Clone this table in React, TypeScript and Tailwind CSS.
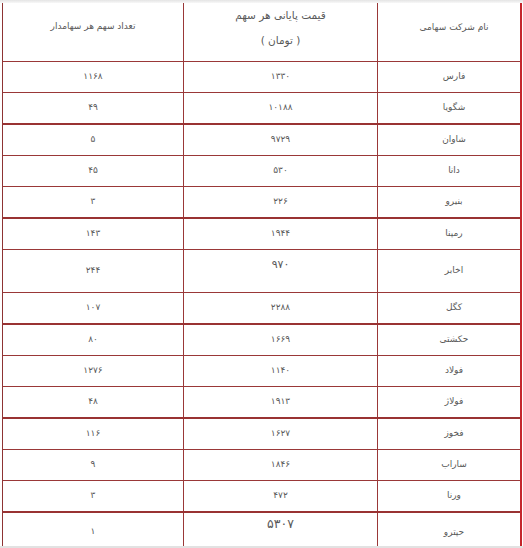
import React from "react";

interface Row {
  name: string;
  price: string;
  count: string;
  h: string;
  thick?: boolean;
}

const rows: Row[] = [
  { name: "فارس", price: "۱۳۳۰", count: "۱۱۶۸", h: "h-[31px]" },
  { name: "شگویا", price: "۱۰۱۸۸", count: "۴۹", h: "h-[32px]", thick: true },
  { name: "شاوان", price: "۹۷۲۹", count: "۵", h: "h-[31px]" },
  { name: "دانا", price: "۵۳۰", count: "۴۵", h: "h-[31px]" },
  { name: "بنیرو", price: "۲۲۶", count: "۳", h: "h-[32px]", thick: true },
  { name: "رمپنا", price: "۱۹۴۴", count: "۱۴۳", h: "h-[31px]" },
  { name: "اخابر", price: "۹۷۰", count: "۲۴۴", h: "h-[43px]" },
  { name: "کگل", price: "۲۲۸۸", count: "۱۰۷", h: "h-[32px]", thick: true },
  { name: "حکشتی", price: "۱۶۶۹", count: "۸۰", h: "h-[31px]" },
  { name: "فولاد", price: "۱۱۴۰", count: "۱۲۷۶", h: "h-[31px]" },
  { name: "فولاژ", price: "۱۹۱۳", count: "۴۸", h: "h-[32px]", thick: true },
  { name: "فخوز", price: "۱۶۲۷", count: "۱۱۶", h: "h-[31px]" },
  { name: "ساراب", price: "۱۸۴۶", count: "۹", h: "h-[31px]" },
  { name: "ورنا", price: "۴۷۲", count: "۳", h: "h-[32px]", thick: true },
];

const App = () => {
  return (
    <div
      className="w-[523px] h-[548px] bg-white overflow-hidden text-[9px] text-[#595959]"
      style={{ fontFamily: '"DejaVu Sans", Tahoma, sans-serif' }}
    >
      <div className="h-[3px] bg-gradient-to-b from-[#e4e4e4] to-[#f8f8f8]" />
      <div
        dir="rtl"
        className="ml-[2px] w-[520px] border-l border-r-2 border-l-[#8e3434] border-r-[#c4262c]"
      >
        {/* header */}
        <div className="flex h-[59px] border-b border-[#9a3838]">
          <div className="w-[142px] pl-[10px] flex items-center justify-center pb-[8px]">
            نام شرکت سهامی
          </div>
          <div className="w-[194px] border-r border-[#9a3838] flex flex-col items-center justify-center text-[10.5px] leading-[25px] pb-[8px]">
            <span>قیمت پایانی هر سهم</span>
            <span>( تومان )</span>
          </div>
          <div className="w-[181px] border-r border-[#9a3838] flex items-center justify-center pb-[10px]">
            تعداد سهم هر سهامدار
          </div>
        </div>

        {rows.map((row) => (
          <div
            key={row.name}
            className={`flex ${row.h} ${row.thick ? "border-b-2 border-[#993232]" : "border-b border-[#9a3838]"}`}
          >
            <div className="w-[142px] pl-[10px] flex items-center justify-center">
              {row.name}
            </div>
            <div className="w-[194px] border-r border-[#9a3838] flex items-center justify-center">
              {row.name === "اخابر" ? (
                <span className="text-[11px] mb-[12px]">{row.price}</span>
              ) : (
                row.price
              )}
            </div>
            <div className="w-[181px] border-r border-[#9a3838] flex items-center justify-center">
              {row.count}
            </div>
          </div>
        ))}

        {/* last row */}
        <div className="flex h-[33px]">
          <div className="w-[142px] pl-[10px] flex items-center justify-center pt-[6px]">
            حپترو
          </div>
          <div className="w-[194px] border-r border-[#9a3838] flex items-center justify-center">
            <span className="text-[12.5px] mb-[10px]">۵۳۰۷</span>
          </div>
          <div className="w-[181px] border-r border-[#9a3838] flex items-center justify-center pt-[4px]">
            ۱
          </div>
        </div>
      </div>
      <div className="h-[2px] bg-[#e2e2e2]" />
    </div>
  );
};

export default App;
